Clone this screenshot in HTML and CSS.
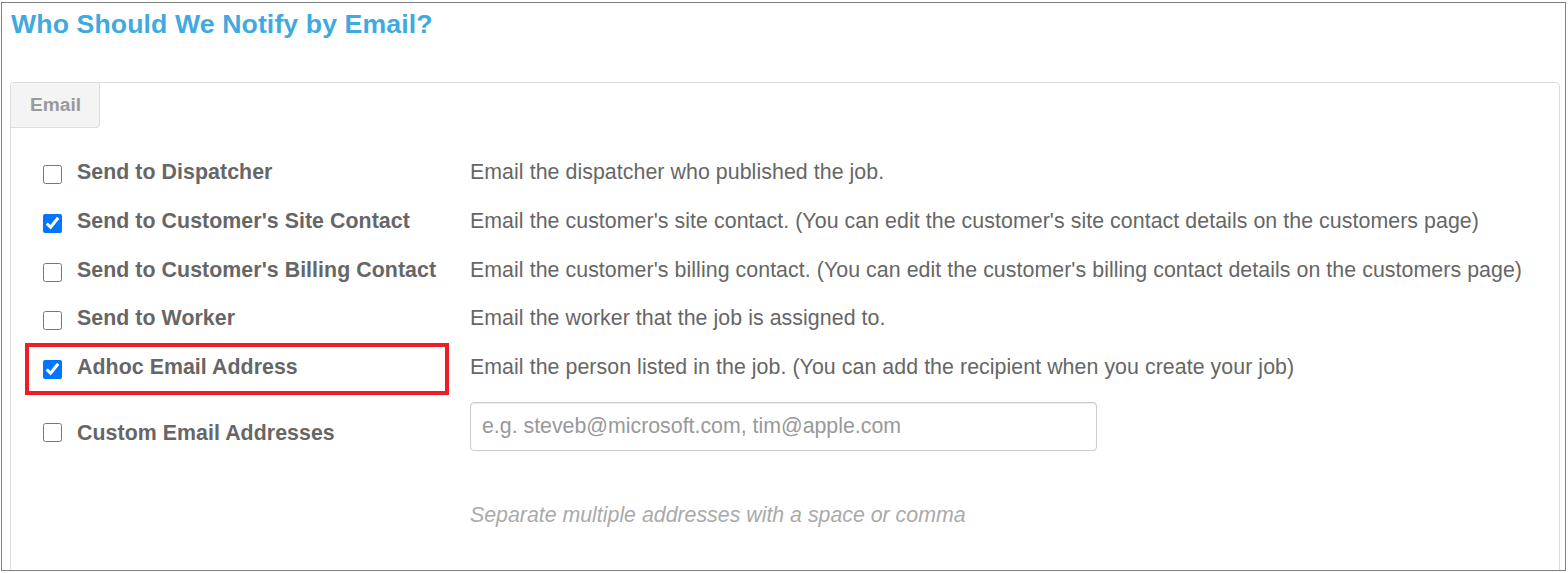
FILE: index.html
```html
<!DOCTYPE html>
<html lang="en">
<head>
<meta charset="utf-8">
<title>Who Should We Notify by Email?</title>
<link rel="stylesheet" href="styles.css">
</head>
<body>
<div class="frame">
  <h1 class="title">Who Should We Notify by Email?</h1>
  <div class="panel">
    <div class="tab">Email</div>
    <div class="rows">
      <div class="row">
        <label class="opt"><input type="checkbox" class="cb"><span class="lbl">Send to Dispatcher</span></label>
        <div class="desc">Email the dispatcher who published the job.</div>
      </div>
      <div class="row">
        <label class="opt"><input type="checkbox" class="cb" checked><span class="lbl">Send to Customer's Site Contact</span></label>
        <div class="desc">Email the customer's site contact. (You can edit the customer's site contact details on the customers page)</div>
      </div>
      <div class="row">
        <label class="opt"><input type="checkbox" class="cb"><span class="lbl">Send to Customer's Billing Contact</span></label>
        <div class="desc">Email the customer's billing contact. (You can edit the customer's billing contact details on the customers page)</div>
      </div>
      <div class="row">
        <label class="opt"><input type="checkbox" class="cb"><span class="lbl">Send to Worker</span></label>
        <div class="desc">Email the worker that the job is assigned to.</div>
      </div>
      <div class="row row-hl">
        <div class="highlight"></div>
        <label class="opt"><input type="checkbox" class="cb" checked><span class="lbl">Adhoc Email Address</span></label>
        <div class="desc">Email the person listed in the job. (You can add the recipient when you create your job)</div>
      </div>
      <div class="row row-custom">
        <label class="opt opt-custom"><input type="checkbox" class="cb cb-center"><span class="lbl">Custom Email Addresses</span></label>
        <div class="custom-col">
          <input type="text" class="email-input" placeholder="e.g. steveb@microsoft.com, tim@apple.com">
          <div class="help">Separate multiple addresses with a space or comma</div>
        </div>
      </div>
    </div>
  </div>
</div>
</body>
</html>
```

FILE: styles.css
```css
html, body {
  margin: 0;
  padding: 0;
  background: #ffffff;
}

body {
  font-family: "Liberation Sans", Arial, sans-serif;
  color: #666666;
}

.frame {
  box-sizing: border-box;
  width: 1565px;
  height: 569px;
  margin: 2px 0 0 1px;
  border: 1px solid #808080;
  padding: 0 5px 0 8px;
  overflow: hidden;
}

.title {
  margin: 5.5px 0 0 1px;
  font-size: 26.67px;
  line-height: 30px;
  font-weight: 700;
  letter-spacing: 0.1px;
  color: #3fa9e1;
}

.panel {
  margin-top: 43.5px;
  height: 560px;
  border: 1px solid #dddddd;
  border-radius: 4px;
}

.tab {
  box-sizing: border-box;
  width: 89px;
  height: 45px;
  padding: 10.6px 0 0 19px;
  background: #f4f4f4;
  border-right: 1px solid #dddddd;
  border-bottom: 1px solid #dddddd;
  border-top-left-radius: 3px;
  border-bottom-right-radius: 4px;
  font-size: 19.2px;
  line-height: 22px;
  font-weight: 700;
  color: #9a9a9a;
}

.rows {
  padding: 19.75px 0 0 32px;
}

.row {
  position: relative;
  display: flex;
  align-items: center;
  height: 48.75px;
}

.opt {
  display: flex;
  align-items: center;
  width: 427px;
  flex: none;
}

.cb {
  width: 19px;
  height: 19px;
  margin: 5px 15px 0 0;
  flex: none;
}

.cb-center {
  margin-top: 0;
}

.lbl {
  font-size: 21.33px;
  line-height: 30px;
  font-weight: 700;
  letter-spacing: 0.06px;
  color: #666666;
  white-space: nowrap;
}

.desc {
  font-size: 21.33px;
  line-height: 30px;
  letter-spacing: 0.065px;
  color: #666666;
  white-space: nowrap;
}

.highlight {
  position: absolute;
  left: -18px;
  top: 0.25px;
  box-sizing: border-box;
  width: 424px;
  height: 52px;
  border: 4px solid #ee1c25;
  pointer-events: none;
}

.row-custom {
  height: auto;
  align-items: flex-start;
  margin-top: 10.5px;
}

.opt-custom {
  padding-top: 15.6px;
}

.custom-col {
  display: flex;
  flex-direction: column;
}

.email-input {
  box-sizing: border-box;
  width: 627px;
  height: 48.5px;
  margin: 0;
  padding: 0 11px;
  border: 1px solid #cccccc;
  border-radius: 4px;
  box-shadow: inset 0 1px 1px rgba(0, 0, 0, 0.075);
  font-family: "Liberation Sans", Arial, sans-serif;
  font-size: 21.33px;
  color: #555555;
  outline: none;
}

.email-input::placeholder {
  color: #999999;
}

.help {
  margin-top: 49.2px;
  font-size: 21.33px;
  line-height: 30px;
  font-style: italic;
  color: #aaaaaa;
  white-space: nowrap;
}
```
